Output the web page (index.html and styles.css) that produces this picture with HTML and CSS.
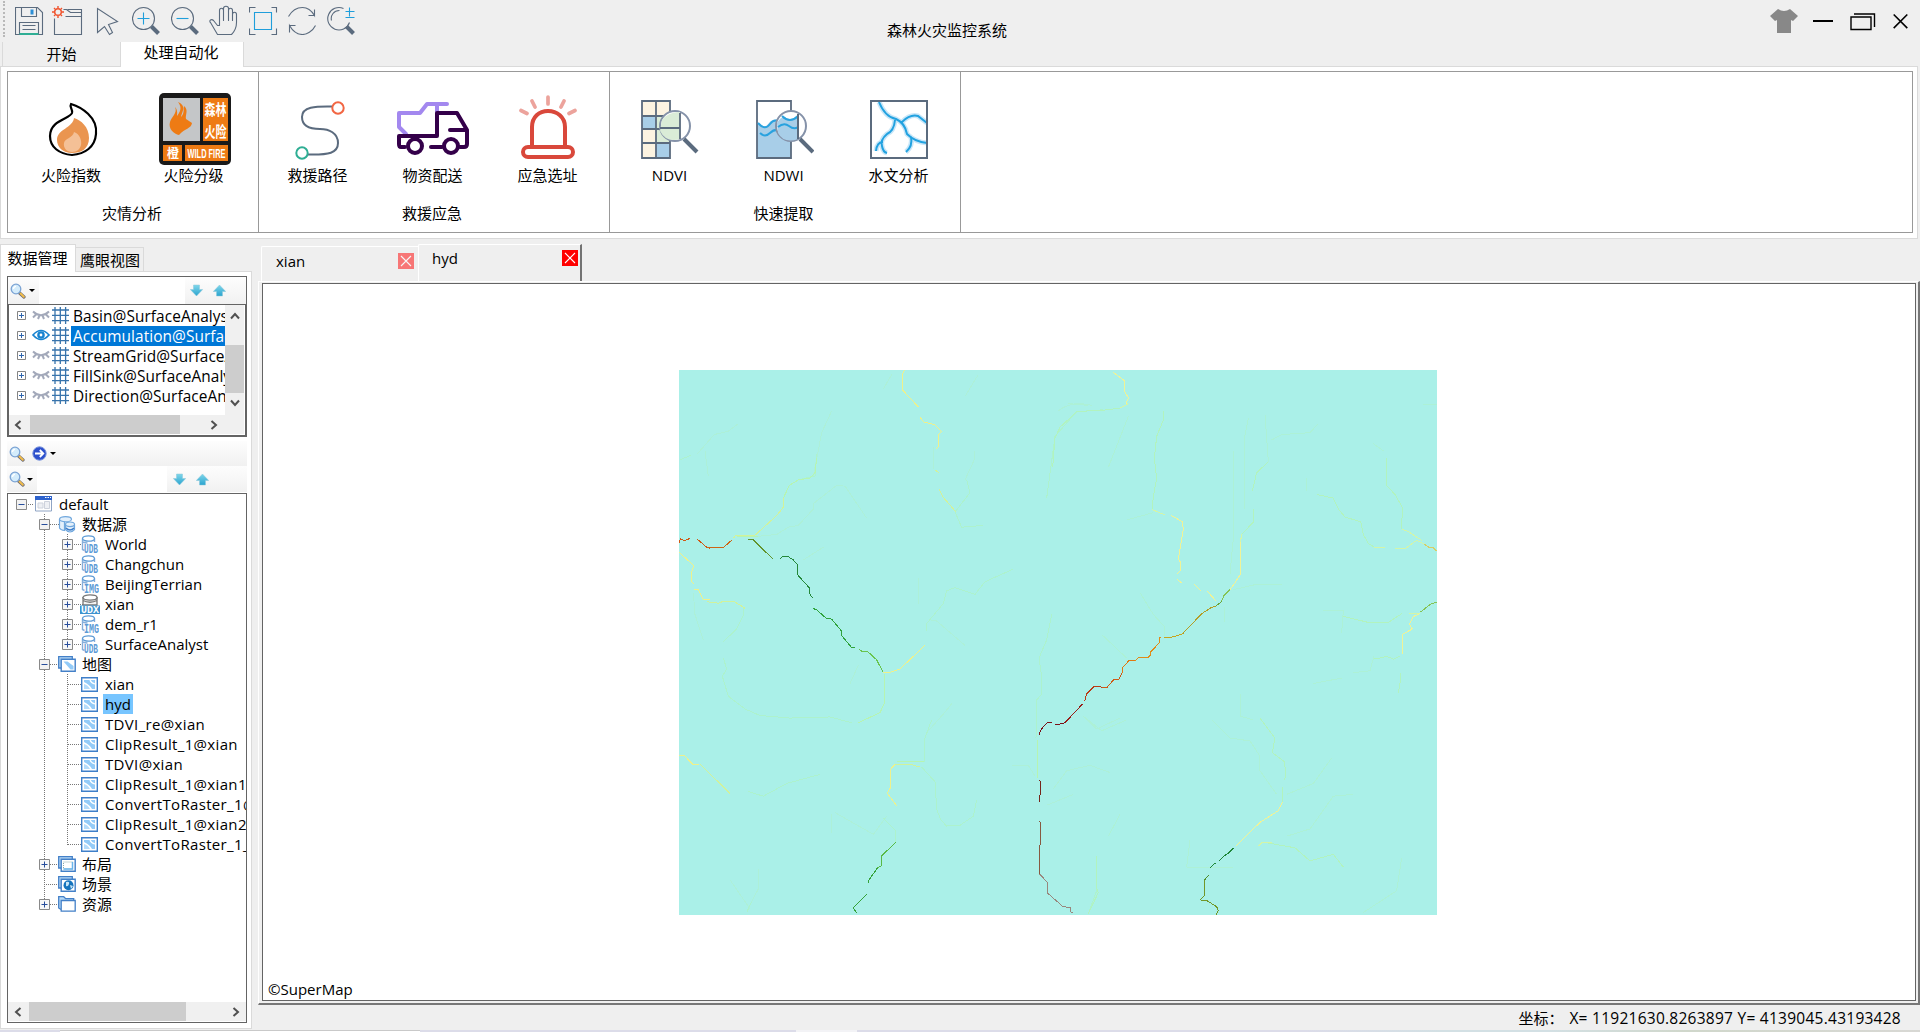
FILE: index.html
```html
<!DOCTYPE html>
<html lang="zh-CN">
<head>
<meta charset="utf-8">
<title>森林火灾监控系统</title>
<link rel="stylesheet" href="styles.css">
</head>
<body>
<svg class="defs" width="0" height="0">
  <defs>
    <linearGradient id="arrowFill" x1="0" y1="0" x2="0" y2="1"><stop offset="0" stop-color="#7fd6ea"/><stop offset="1" stop-color="#2ba4cf"/></linearGradient>
    <symbol id="search" viewBox="0 0 16 16"><path d="M9 9.500l5 4.500" stroke="#6a6a76" stroke-width="3.200" stroke-linecap="round"/><path d="M10.500 10.500l3.300 3.200" stroke="#f2bd4b" stroke-width="2" stroke-linecap="round"/><circle cx="6" cy="6" r="4.800" fill="#d4ecfb" stroke="#7ba3d4" stroke-width="1.300"/><path d="M3.500 6a2.500 2.500 0 0 1 2.500-2.600" stroke="#fff" stroke-width="1.400" fill="none"/></symbol>
    <symbol id="down" viewBox="0 0 13 13"><path d="M3.500 1h6v4.500h3.200l-6.200 6.500L.3 5.500h3.200z" fill="url(#arrowFill)" stroke="#8fc8da" stroke-width=".5"/></symbol>
    <symbol id="up" viewBox="0 0 13 13"><path d="M3.500 12h6V7.500h3.200L6.500 1 .3 7.500h3.200z" fill="url(#arrowFill)" stroke="#8fc8da" stroke-width=".5"/></symbol>
    <symbol id="go" viewBox="0 0 15 15"><circle cx="7.500" cy="7.500" r="6.700" fill="#2d50cc" stroke="#7b94dd"/><path d="M3 7.500h8M7.800 4l3.500 3.500L7.800 11" fill="none" stroke="#fff" stroke-width="1.800"/></symbol>
    <symbol id="closed-eye" viewBox="0 0 18 10"><path d="M1 1.500q8 7.500 16 0M4.500 4L1 7.500M7.500 5.500L6 9M10.500 5.500L12 9M13.500 4L17 7.500" fill="none" stroke="#a3a9ba" stroke-width="2"/></symbol>
    <symbol id="open-eye" viewBox="0 0 18 12"><path d="M1 6q8-9 16 0-8 9-16 0z" fill="#fff" stroke="#1683d0" stroke-width="1.700"/><circle cx="9" cy="6" r="3.800" fill="#1683d0"/><circle cx="9" cy="6" r="1.400" fill="#fff"/></symbol>
    <symbol id="raster" viewBox="0 0 17 17"><path d="M0 3h17M0 8.300h17M0 13.600h17M3 0v17M8.300 0v17M13.600 0v17" stroke="#3773ab" stroke-width="1.300"/></symbol>
    <symbol id="workspace" viewBox="0 0 18 16"><path d="M.5 1h16v14H.5z" fill="#fff" stroke="#8fa4c4"/><path d="M0 0h17v4H0z" fill="#2d62cc"/><path d="M10 1.500h6" stroke="#fff" stroke-dasharray="1.500 1"/><path d="M3 7h5v5H3zM9.500 5.500h5v7h-5z" fill="#eef0f4" stroke="#cdd2dc"/></symbol>
    <symbol id="sources" viewBox="0 0 18 17"><g fill="#e4f0fb" stroke="#70a7dd" stroke-width="1.200"><path d="M1.500 3v9q1 2 5 2.500V5"/><ellipse cx="7.500" cy="3.200" rx="6" ry="2.600"/><path d="M7.500 8.500v5q4.500 5 9 0v-5"/><ellipse cx="12" cy="8.300" rx="4.500" ry="2.300"/></g><path d="M8 12q4 4 8 0" fill="none" stroke="#3d7cc9" stroke-width="1.300"/></symbol>
    <symbol id="cylinder" viewBox="0 0 18 18"><path d="M1.500 3.500v11l2 1M13.500 3.500V7M1.500 7q3 1 5 1" fill="none" stroke="#86aedb" stroke-width="1.400"/><ellipse cx="7.500" cy="3.500" rx="6" ry="2.700" fill="#fff" stroke="#5f9cd6" stroke-width="1.300"/></symbol>
    <symbol id="mapicon" viewBox="0 0 17 15"><path d="M.7.700h15.600v13.600H.7z" fill="#fff" stroke="#3e7fc9" stroke-width="1.400"/><path d="M3 3h11v9h-3Q9 8 3 5z" fill="#93cbf8"/><path d="M3 7q4 1 6 5H3z" fill="#b5dcfb"/><path d="M9 3q1 3 5 4" stroke="#fff" stroke-width="1.200" fill="none"/></symbol>
    <symbol id="stack" viewBox="0 0 18 16"><path d="M3 12H.7V.7h13.600V3" fill="#b6d8f6" stroke="#4380c8" stroke-width="1.300"/><path d="M3.200 3.200h14v12h-14z" fill="#fff" stroke="#4380c8" stroke-width="1.400"/></symbol>
    <symbol id="plus" viewBox="0 0 11 11"><path d="M.5.5h10v10H.5z" fill="#f7f7f7" stroke="#898989"/><path d="M2.500 5.500h6M5.500 2.500v6" stroke="#274d9b"/></symbol>
    <symbol id="minus" viewBox="0 0 11 11"><path d="M.5.5h10v10H.5z" fill="#f2f2f2" stroke="#898989"/><path d="M2.500 5.500h6" stroke="#274d9b"/></symbol>
    <symbol id="plus-sm" viewBox="0 0 9 9"><path d="M.5.5h8v8H.5z" fill="#fff" stroke="#848484"/><path d="M2 4.500h5M4.500 2v5" stroke="#2f66ad"/></symbol>
    <symbol id="chev-l" viewBox="0 0 8 10"><path d="M6.500 1L2 5l4.500 4" fill="none" stroke="#505050" stroke-width="2"/></symbol>
    <symbol id="chev-r" viewBox="0 0 8 10"><path d="M1.500 1L6 5 1.500 9" fill="none" stroke="#505050" stroke-width="2"/></symbol>
    <symbol id="tabclose" viewBox="0 0 16 16"><path d="M0 0h16v16H0z" fill="#f00"/><path d="M3 3l10 10M13 3L3 13" stroke="#fff" stroke-width="1.100"/></symbol>
  </defs>
</svg>

<div class="window">
  <header class="titlebar">
    <div class="tools">
      <span class="grip"></span>
      <svg width="29" height="29" viewBox="-.5 -.5 29 29"><path d="M0 1h22l5 5v22H0zM6 1v9h15V1M4 28V16h19v12M7 19h13M7 23h13"/><path d="M15 3h3v5h-3z" fill="#2c8fd6" stroke="none"/><path d="M4 27.500h19" stroke="#2fae94" stroke-width="2"/></svg>
      <svg class="raised" width="31" height="31" viewBox="-.5 -.5 31 31"><path d="M2 13v16h27V4H15M11 4h3l4 3h11M13 11h16"/><circle cx="5.500" cy="6.500" r="3.300" stroke="#f0532d" stroke-width="1.500"/><path d="M5.500.500v2M5.500 10.500v2M-.500 6.500h2M9.500 6.500h2M1.500 2.500l1 1M8.500 9.500l1 1M9.500 2.500l-1 1M2.500 9.500l-1 1" stroke="#f0532d" stroke-width="1.400"/></svg>
      <svg class="cursor" width="23" height="29" viewBox="-.5 -.5 23 29"><path d="M1 1v24l7-6 5 8 3-2-4-8 9-3z"/></svg>
      <svg width="29" height="29" viewBox="-.5 -.5 29 29"><circle cx="11" cy="12" r="11"/><path d="M19 20l7 7" stroke-width="4"/><path d="M5 12h12M11 6v12" stroke="#1f9edb"/></svg>
      <svg width="29" height="29" viewBox="-.5 -.5 29 29"><circle cx="11" cy="12" r="11"/><path d="M19 20l7 7" stroke-width="4"/><path d="M5 12h12" stroke="#1f9edb"/></svg>
      <svg class="hand" width="29" height="30" viewBox="-.5 -.5 29 30"><path d="M8 29h14c4-4 5-8 5-12V9c0-3-4-3-4 0v6V5c0-3-4-3-4 0v10V3c0-3-5-3-5 0v12V5c0-3-4-3-4 0v15l-2 0-4-5c-2-2-5 0-3 2z" stroke-linejoin="round"/></svg>
      <svg width="29" height="29" viewBox="-.5 -.5 29 29"><path d="M0 6V1h6M22 1h5v5M27 22v6h-5M6 28H0v-6"/><path d="M5 6h17v17H5z" stroke="#1f9edb"/></svg>
      <svg width="29" height="29" viewBox="-.5 -.5 29 29"><path d="M0 10C4 3 10 1 14 1s9 3 12 8V3M26 9h-6M27 19C24 25 18 28 14 28S5 26 1 19v7M1 19h6"/></svg>
      <svg width="29" height="29" viewBox="-.5 -.5 29 29"><path d="M16 2A11.200 11.200 0 1 0 22 16M4 14A8 8 0 0 1 12 4"/><path d="M19 20l7 7" stroke-width="4"/><path d="M18 5h9M22 1v9M18 11h9" stroke="#1f9edb"/></svg>
    </div>
    <h1>森林火灾监控系统</h1>
    <div class="winbtns">
      <svg width="28" height="25" viewBox="0 0 28 25"><path d="M8 0q6 4 12 0l8 7-5 5-2-1v13H7V11l-2 1-5-5z" fill="#888"/></svg>
      <svg width="20" height="25" viewBox="0 0 20 25"><path d="M0 12h20" stroke="#000" stroke-width="2"/></svg>
      <svg width="26" height="25" viewBox="0 0 26 25" fill="none" stroke="#000" stroke-width="1.400"><path d="M1 8h20v12.500H1zM4 5h20.500v13"/></svg>
      <svg width="15" height="25" viewBox="0 0 15 25"><path d="M.7 5.500l13.600 13.600M14.300 5.500L.7 19.100" stroke="#000" stroke-width="1.600"/></svg>
    </div>
  </header>

  <nav class="ribbon-tabs"><span class="rtab">开始</span><span class="rtab active">处理自动化</span></nav>

  <section class="ribbon">
    <div class="groups">
      <div class="group g1">
        <div class="buttons">
          <div class="btn flame"><svg width="72" height="72" viewBox="0 0 72 72"><path d="M24 11c10 3 27 13 25 30-1 13-11 20-24 21-13-1-22-8-22-19 0-16 20-17 22-23 1-4-3-6-1-9z" fill="none" stroke="#000" stroke-width="2.200"/><path d="M27 25c7 2 15 9 15 20s-8 15-17 15-15-6-15-13c0-11 16-12 17-22z" fill="#ea9550"/><path d="M27 39c6 2 8 9 7 13s-4 7-9 7-9-4-8-9 9-5 10-11z" fill="#f4c096"/></svg><label>火险指数</label></div>
          <div class="btn badge"><svg width="72" height="72" viewBox="0 0 72 72"><rect width="72" height="72" rx="5" fill="#1a1a1a"/><path d="M4 5h37v43H4z" fill="#c4c6c8"/><path d="M44 5h25v43H44zM4 52h19v16H4zM26 52h43v16H26z" fill="#ee7b14"/><path d="M19 9c9 4 4 10 3 15 4-4 2-8 3-11 5 4 1 9 2 13l6 4c-1 6-7 5-13 12-5-1-11-6-9-13 1-5 8-9 5-15 3 3 2 7 2 9 5-6 4-10 1-14z" fill="#ee7b14"/><g class="badge-cjk"><text x="45.500" y="22" font-size="15" textLength="22" lengthAdjust="spacingAndGlyphs">森林</text><text x="45.500" y="44" font-size="15" textLength="22" lengthAdjust="spacingAndGlyphs">火险</text><text x="8" y="65" font-size="12">橙</text></g><text class="badge-latin" x="28.500" y="65" textLength="38" lengthAdjust="spacingAndGlyphs">WILD FIRE</text></svg><label>火险分级</label></div>
        </div>
        <div class="caption">灾情分析</div>
      </div>
      <div class="group g2">
        <div class="buttons">
          <div class="btn"><svg width="50" height="72" viewBox="0 0 50 72" fill="none"><path d="M38 13.500C20 13 7 14 7 24s9 12 18 12 18 4 18 14-9 12-30 11.500" stroke="#5b6b7e" stroke-width="2"/><circle cx="43" cy="15" r="5.700" fill="#fff" stroke="#f26643" stroke-width="2"/><circle cx="7" cy="60" r="5.700" fill="#fff" stroke="#2fae94" stroke-width="2"/></svg><label>救援路径</label></div>
          <div class="btn"><svg width="72" height="72" viewBox="0 0 72 72" fill="none" stroke-width="4" stroke-linejoin="round" stroke-linecap="round"><path d="M9 41l-7-7V20h21l7-9h20M40 11v8" stroke="#a388ef"/><path d="M8 54H4q-2 0-2-3v-8h38V20h20l10 17v14q0 3-3 3h-4M53 37h15M34 54h11" stroke="#34004a"/><circle cx="18" cy="53" r="7" stroke="#34004a"/><circle cx="54" cy="53" r="7" stroke="#34004a"/></svg><label>物资配送</label></div>
          <div class="btn"><svg width="58" height="72" viewBox="0 0 58 72" fill="none" stroke-linecap="round"><path d="M13 54V34c0-10 7-16 16-16s17 6 17 16v20" stroke="#d9483b" stroke-width="4"/><rect x="4" y="54" width="50" height="10" rx="5" stroke="#d9483b" stroke-width="4"/><path d="M29 4v7M13 8l3 6M45 8l-3 6M2 17.500l6 3M56 17.500l-6 3" stroke="#eca39c" stroke-width="3.700"/></svg><label>应急选址</label></div>
        </div>
        <div class="caption">救援应急</div>
      </div>
      <div class="group g3">
        <div class="buttons">
          <div class="btn"><svg width="58" height="72" viewBox="0 0 58 72"><path d="M1 8h28v57H1z" fill="#fcf3e1"/><path d="M1 23h14v13H1zM15 50h14v15H15z" fill="#a8cee8"/><path d="M15 23h14v27H15z" fill="#daecd7"/><path d="M1 8h28v57H1zM15 8v57M1 23h28M1 36h28M1 50h28" fill="none" stroke="#5b6b7e" stroke-width="1.800"/><circle cx="34" cy="33" r="15" fill="#fff" stroke="#8592a9" stroke-width="2"/><path d="M21 27q6-8 18-8v27q-14 4-20-8z" fill="#daecd7"/><path d="M19 35h20M39 20v26" stroke="#5b6b7e" stroke-width="1.800"/><path d="M43 46l13 13" stroke="#5b6b7e" stroke-width="4"/></svg><label>NDVI</label></div>
          <div class="btn"><svg width="58" height="72" viewBox="0 0 58 72"><path d="M1 30q7 7 12 0t16 0h6v35H1z" fill="#a8cee8"/><path d="M1 8h34v57H1z" fill="none" stroke="#5b6b7e" stroke-width="1.800"/><path d="M2 30q7 8 12 1t13 0M4 40q5 5 10 0t12-2" fill="none" stroke="#29a2df" stroke-width="2"/><circle cx="35" cy="33" r="15" fill="#fff" stroke="#8592a9" stroke-width="2"/><path d="M21 30q3-6 8-6 5 6 13 0v22q-14 5-20-6z" fill="#a8cee8"/><path d="M26 23q8 8 16 0M22 34q6-5 11-1 5 4 9 1" fill="none" stroke="#29a2df" stroke-width="2"/><path d="M42 21v25" stroke="#5b6b7e" stroke-width="2"/><path d="M44 46l13 13" stroke="#5b6b7e" stroke-width="4"/></svg><label>NDWI</label></div>
          <div class="btn water"><svg width="60" height="72" viewBox="0 0 60 72" fill="none"><g stroke="#c8e6f8" stroke-width="5"><path d="M10 9q6 15 17 17 9 4 11 15 8 8 20 9M33 29q8-8 16-6l9 7M26 27q-1 11-8 14-7 6-5 12 1 6 5 7M14 49q-6 0-7 9M42 44q2 9-5 15"/></g><g stroke="#22a2e0" stroke-width="2"><path d="M10 9q6 15 17 17 9 4 11 15 8 8 20 9M33 29q8-8 16-6l9 7M26 27q-1 11-8 14-7 6-5 12 1 6 5 7M14 49q-6 0-7 9M42 44q2 9-5 15"/></g><path d="M2 8h56v57H2z" stroke="#5b6b7e" stroke-width="2"/></svg><label>水文分析</label></div>
        </div>
        <div class="caption">快速提取</div>
      </div>
    </div>
  </section>

  <main class="workarea">
    <aside class="side">
      <div class="side-tabs"><span class="stab active">数据管理</span><span class="stab">鹰眼视图</span></div>
      <div class="side-body">
        <div class="layers">
          <div class="bar b1"><svg class="mag" width="16" height="16"><use href="#search"/></svg><i class="drop"></i><span class="field"></span><svg width="13" height="13"><use href="#down"/></svg><svg width="13" height="13"><use href="#up"/></svg></div>
          <div class="layer-view">
            <div class="layer-rows">
              <div class="layer"><svg class="ex" width="9" height="9"><use href="#plus-sm"/></svg><svg width="18" height="10"><use href="#closed-eye"/></svg><svg width="17" height="17"><use href="#raster"/></svg><span>Basin@SurfaceAnalyst</span></div>
              <div class="layer sel"><svg class="ex" width="9" height="9"><use href="#plus-sm"/></svg><svg width="18" height="12"><use href="#open-eye"/></svg><svg width="17" height="17"><use href="#raster"/></svg><span>Accumulation@SurfaceAnalyst</span></div>
              <div class="layer"><svg class="ex" width="9" height="9"><use href="#plus-sm"/></svg><svg width="18" height="10"><use href="#closed-eye"/></svg><svg width="17" height="17"><use href="#raster"/></svg><span>StreamGrid@SurfaceAnalyst</span></div>
              <div class="layer"><svg class="ex" width="9" height="9"><use href="#plus-sm"/></svg><svg width="18" height="10"><use href="#closed-eye"/></svg><svg width="17" height="17"><use href="#raster"/></svg><span>FillSink@SurfaceAnalyst</span></div>
              <div class="layer"><svg class="ex" width="9" height="9"><use href="#plus-sm"/></svg><svg width="18" height="10"><use href="#closed-eye"/></svg><svg width="17" height="17"><use href="#raster"/></svg><span>Direction@SurfaceAnalyst</span></div>
            </div>
            <div class="vscroll"><svg width="10" height="8" viewBox="0 0 10 8"><path d="M1 6.500L5 2l4 4.500" fill="none" stroke="#505050" stroke-width="2"/></svg><i></i><svg width="10" height="8" viewBox="0 0 10 8"><path d="M1 1.500L5 6l4-4.500" fill="none" stroke="#505050" stroke-width="2"/></svg></div>
            <div class="hscroll h1"><svg width="8" height="10"><use href="#chev-l"/></svg><i></i><svg width="8" height="10"><use href="#chev-r"/></svg></div>
          </div>
        </div>
        <div class="bar b2"><svg class="mag" width="16" height="16"><use href="#search"/></svg><svg width="15" height="15"><use href="#go"/></svg><i class="drop"></i></div>
        <div class="bar b3"><svg class="mag" width="16" height="16"><use href="#search"/></svg><i class="drop"></i><span class="field"></span><svg width="13" height="13"><use href="#down"/></svg><svg width="13" height="13"><use href="#up"/></svg></div>
        <div class="tree-box">
          <div class="tree">
            <div class="node l0"><svg class="ex" width="11" height="11"><use href="#minus"/></svg><svg class="ic" width="18" height="16"><use href="#workspace"/></svg><span>default</span></div>
            <div class="branch b-root">
              <div class="node l1"><svg class="ex" width="11" height="11"><use href="#minus"/></svg><svg class="ic" width="18" height="17"><use href="#sources"/></svg><span>数据源</span></div>
              <div class="branch b-sub">
                <div class="node l2"><svg class="ex" width="11" height="11"><use href="#plus"/></svg><svg class="ic" width="18" height="18"><use href="#cylinder"/><text class="tag" x="3" y="17.500" textLength="14" lengthAdjust="spacingAndGlyphs">UDB</text></svg><span>World</span></div>
                <div class="node l2"><svg class="ex" width="11" height="11"><use href="#plus"/></svg><svg class="ic" width="18" height="18"><use href="#cylinder"/><text class="tag" x="3" y="17.500" textLength="14" lengthAdjust="spacingAndGlyphs">UDB</text></svg><span>Changchun</span></div>
                <div class="node l2"><svg class="ex" width="11" height="11"><use href="#plus"/></svg><svg class="ic" width="18" height="18"><use href="#cylinder"/><text class="tag" x="3" y="17.500" textLength="15" lengthAdjust="spacingAndGlyphs">IMG</text></svg><span>BeijingTerrian</span></div>
                <div class="node l2"><svg class="ex" width="11" height="11"><use href="#plus"/></svg><svg class="ic udx" width="20" height="20" viewBox="0 0 20 20"><path d="M3 3v8h14V3M3 6.500q7 3.500 14 0" fill="#f3f3f3" stroke="#777" stroke-width="1.300"/><ellipse cx="10" cy="3.500" rx="7" ry="2.600" fill="#fff" stroke="#777" stroke-width="1.300"/><path d="M0 11.500h20V20H0z" fill="#3c92cf"/><text class="udx-tag" x="1" y="19" textLength="18" lengthAdjust="spacingAndGlyphs">UDX</text></svg><span>xian</span></div>
                <div class="node l2"><svg class="ex" width="11" height="11"><use href="#plus"/></svg><svg class="ic" width="18" height="18"><use href="#cylinder"/><text class="tag" x="3" y="17.500" textLength="15" lengthAdjust="spacingAndGlyphs">IMG</text></svg><span>dem_r1</span></div>
                <div class="node l2"><svg class="ex" width="11" height="11"><use href="#plus"/></svg><svg class="ic" width="18" height="18"><use href="#cylinder"/><text class="tag" x="3" y="17.500" textLength="14" lengthAdjust="spacingAndGlyphs">UDB</text></svg><span>SurfaceAnalyst</span></div>
              </div>
              <div class="node l1"><svg class="ex" width="11" height="11"><use href="#minus"/></svg><svg class="ic" width="18" height="16" viewBox="0 0 18 16"><use href="#stack" width="18" height="16"/><path d="M5.500 5.500h4l6 4.500v3.500h-3z" fill="#93cbf8"/></svg><span>地图</span></div>
              <div class="branch b-maps">
                <div class="node l2 leaf"><svg class="ic" width="17" height="15"><use href="#mapicon"/></svg><span>xian</span></div>
                <div class="node l2 leaf cur"><svg class="ic" width="17" height="15"><use href="#mapicon"/></svg><span>hyd</span></div>
                <div class="node l2 leaf wide"><svg class="ic" width="17" height="15"><use href="#mapicon"/></svg><span>TDVI_re@xian</span></div>
                <div class="node l2 leaf wide"><svg class="ic" width="17" height="15"><use href="#mapicon"/></svg><span>ClipResult_1@xian</span></div>
                <div class="node l2 leaf wide"><svg class="ic" width="17" height="15"><use href="#mapicon"/></svg><span>TDVI@xian</span></div>
                <div class="node l2 leaf wide"><svg class="ic" width="17" height="15"><use href="#mapicon"/></svg><span>ClipResult_1@xian1</span></div>
                <div class="node l2 leaf wide"><svg class="ic" width="17" height="15"><use href="#mapicon"/></svg><span>ConvertToRaster_1@xian</span></div>
                <div class="node l2 leaf wide"><svg class="ic" width="17" height="15"><use href="#mapicon"/></svg><span>ClipResult_1@xian2</span></div>
                <div class="node l2 leaf wide"><svg class="ic" width="17" height="15"><use href="#mapicon"/></svg><span>ConvertToRaster_1_1</span></div>
              </div>
              <div class="node l1"><svg class="ex" width="11" height="11"><use href="#plus"/></svg><svg class="ic" width="18" height="16" viewBox="0 0 18 16"><use href="#stack" width="18" height="16"/><path d="M5.500 6h9v7h-9z" fill="none" stroke="#8aa" stroke-dasharray="1 1"/><path d="M14.500 6v7h-9" fill="none" stroke="#69b5ec" stroke-width="1.500"/></svg><span>布局</span></div>
              <div class="node l1 leaf"><svg class="ic" width="18" height="16" viewBox="0 0 18 16"><use href="#stack" width="18" height="16"/><circle cx="10.500" cy="9.300" r="5" fill="#1674bd"/><path d="M8 6q4-1 3 2t-3 2zM12 9l3 1-2 3z" fill="#c5e5f7"/></svg><span>场景</span></div>
              <div class="node l1"><svg class="ex" width="11" height="11"><use href="#plus"/></svg><svg class="ic" width="18" height="16" viewBox="0 0 18 16"><path d="M3 13.500L.7 12V.7h5l2 2h8V5" fill="#b6d8f6" stroke="#4380c8" stroke-width="1.300"/><path d="M3.200 4.500h14v10.700h-14z" fill="#fff" stroke="#4380c8" stroke-width="1.300"/></svg><span>资源</span></div>
            </div>
          </div>
          <div class="hscroll h2"><svg width="8" height="10"><use href="#chev-l"/></svg><i></i><svg width="8" height="10"><use href="#chev-r"/></svg></div>
        </div>
      </div>
    </aside>

    <section class="docs">
      <div class="doc-tabs"><div class="dtab"><span>xian</span><svg class="dim" width="16" height="16"><use href="#tabclose"/></svg></div><div class="dtab active"><span>hyd</span><svg width="16" height="16"><use href="#tabclose"/></svg></div></div>
      <div class="page">
        <div class="canvas">
          <svg class="map" width="758" height="545" viewBox="0 0 758 545" shape-rendering="crispEdges">
            <rect width="758" height="545" fill="#aaf0e8"/>
            <g class="river" transform="translate(-9 -10) scale(.33333 .3635)">
              <g stroke="#adf0d8"><path d="M82 258L133 205 175 196 205 175M180 1430l60 80M245 1490l20-35V1400M105 250L115 320M430 320l25-120 30-60M495 1245l115 60 40-50M485 1250v50M775 1020q60-60 70-75M885 330l30-60V250M790 240v60M925 40l-40 60M1165 140q40-30 100-15"/><path d="M265 485L320 480 355 460 385 455 430 410V395L500 345 525 347 590 435M70 640L75 700 100 770M640 80L665 40M745 600V670M780 715L800 718 885 785M400 550l60-35M540 890l25-50M1240 980l40 35 70-30M1130 1225l80-30M1150 1180L1190 1130 1260 1115 1320 1135M1025 1115h50l20 30"/></g>
              <g stroke="#adf2cd"><path d="M30 275L62 262M384 330L420 322 435 320 440 260M160 775L200 740 222 700V680M160 820L170 850 157 870 175 925 225 960 270 978 360 985 480 982 545 998M235 1187L280 1200 350 1165 450 1140M765 1105V1040L785 990M755 1120L795 1160 800 1235 812 1265 830 1282 870 1280 910 1255 920 1210M640 1260L678 1295V1325M770 745V725L820 670 830 635 855 626 915 645 945 610 1030 575M855 418L900 365 890 330M855 418L875 460 940 455M1130 380L1155 210 1220 142 1300 137M1145 700L1130 770 1107 820 1115 870V920L1100 935 1098 1040M1280 1365V1460L1255 1523M230 1520l15-30"/></g>
              <g stroke="#b7f4b1"><path d="M265 485H200M440 270L435 310 420 325 385 330 358 345 340 380M643 865V945L630 970 565 998M680 1105H763M1103 1045V1150"/></g>
              <path stroke="#d2f29b" d="M340 380V405L320 428 255 482H198L190 490M110 665L145 669 160 664H192L225 683M90 1112L180 1192M675 1112H720L750 1120M797 303l9 7M808 356l10 20 40 42"/>
              <path stroke="#eff18b" d="M27 529L71 565 65 585V610L72 615M73 632H85L100 660H120M27 1088H43L68 1112H88M703 28L697 40V82L745 129M751 158L760 170 795 178 814 197 806 205V238L798 244M661 1127L675 1112M661 1127V1177L652 1192 681 1227M640 859H660L690 850 765 785"/>
              <path stroke="#cf5915" d="M27 502L31 492 42 497 60 491M82 493L110 515 120 518"/><path stroke="#cd6515" d="M110 516H160L186 495"/>
              <path stroke="#62932d" d="M235 493H248L308 547"/><path stroke="#24883a" d="M331 546L338 540H353L370 550 382 563V590L418 627V642L428 655"/><path stroke="#2fa33c" d="M430 684L440 687 468 710 485 713 514 745V757L545 791H555"/><path stroke="#69c44e" d="M568 797L575 801H592L620 825 638 857"/>
              <path stroke="#59b946" d="M677 1327L634 1365V1391L622 1398"/><path stroke="#36a23a" d="M622 1398L597 1430V1440M590 1470L550 1506 559 1521"/>
              <path stroke="#76261b" d="M1109 1154L1111 1160V1193L1109 1199V1215"/><path stroke="#875941" d="M1109 1269L1111 1272V1332L1109 1337V1414"/><path stroke="#98877d" d="M1109 1414L1132 1437V1466L1178 1503 1201 1507V1517L1210 1522"/>
            </g>
            <g class="river" transform="translate(341 -10) scale(.33333 .3635)">
              <g stroke="#adf1d6"><path d="M325 155L265 295M145 120L205 125M640 250V490L630 590M685 160L674 210V410M735 150L745 280M755 220L785 205 870 200 895 175M1060 230L1090 250M860 325V360M245 755L320 820M360 640L400 700 435 735V760M640 632L710 617H785M615 680V720M1000 860L1050 855 1062 815M880 890l85-15M662 920V980L700 990M575 990L630 1040 690 1048 720 1090V1130L770 1195M300 1250L265 1310M800 1310L870 1290 940 1200 1000 1195M500 1395H640M510 1320L500 1395M1145 1370L1130 1460 1030 1520M190 980L245 1020 320 990M800 1195l80-30 55-70M1210 122h40M320 440L400 420M910 690h60l-5 60"/></g>
              <g stroke="#b2f3be"><path d="M98 295L105 215 120 185 170 142 265 137 300 132M430 140V165L410 210 403 270 410 325 400 375 397 410M745 280L710 310 697 360M701 410V445L665 480M1100 270V345L1125 370 1147 405 1145 465M890 370L940 380 955 410 975 432 1022 445 1030 480 1045 505 1065 516M970 705L1045 722 1105 722 1145 698M1062 820H1080L1100 815 1120 823 1140 815M1142 860V880L1135 915M720 985L765 1040 757 1080 793 1105 798 1140 793 1155M787 1175V1220M229 1365V1450L235 1465 205 1523M740 1328L825 1342 870 1378 940 1360 970 1395"/></g>
              <path stroke="#d4f5a8" d="M300 132L325 120M397 412L435 426M666 478L661 500M1126 518H1157L1190 496 1212 506M1062 516H1095M1145 465L1165 472 1205 496M1168 697H1200M715 1337L725 1328 755 1327"/>
              <path stroke="#f0f396" d="M280 34L313 57V85L325 104 318 120M453 427L487 445 490 465 480 520 475 548 481 555V580L472 588M472 604L485 613M523 617L543 635M562 636L588 663M661 500V590L640 620M645 613L630 632M1200 697L1180 706 1168 727 1177 740 1147 755V810M787 1217L775 1240 720 1272 648 1337"/><path stroke="#d8ce65" d="M1212 506L1230 517H1240L1251 526"/>
              <path stroke="#85c354" d="M630 632L612 648 605 663M1201 694L1220 680 1235 670 1251 667"/><path stroke="#6aa43a" d="M605 663L598 670 587 677"/>
              <path stroke="#b39d25" d="M587 677L572 682 545 698 488 753"/><path stroke="#c7a41c" d="M488 753L470 759 450 763H432"/><path stroke="#e18b17" d="M423 763L418 765V778L392 803V812L384 818H357L344 828"/><path stroke="#e07811" d="M344 828H326L307 847V860"/><path stroke="#cf5915" d="M307 860L297 878H283L264 897V901H245"/><path stroke="#ba3b15" d="M245 901L242 898H222L199 920 194 938"/><path stroke="#971d18" d="M188 946L150 983 134 998"/><path stroke="#791118" d="M134 998L116 1002H105M96 997H83L69 1009 58 1027V1032"/>
              <path stroke="#1f8739" d="M643 1341L622 1359 611 1365 598 1378M587 1383L571 1396"/><path stroke="#528f2b" d="M566 1417L554 1430"/><path stroke="#729629" d="M554 1430V1473L541 1484 545 1487H560L590 1504 595 1515 589 1526"/>
            </g>
          </svg>
          <div class="credit">©SuperMap</div>
        </div>
      </div>
      <div class="status"><span>坐标：</span><span class="coords">X= 11921630.8263897 Y= 4139045.43193428</span></div>
    </section>
  </main>
  <footer class="strip"><i class="s1"></i><i class="s2"></i><i class="s3"></i><i class="s4"></i><i class="s5"></i></footer>
</div>
</body>
</html>
```

FILE: styles.css
```css
* { box-sizing: border-box; }
html, body { margin: 0; width: 1920px; height: 1032px; overflow: hidden; }
body { background: #efefef; color: #000; font: 15px/20px "Open Sans", "Noto Sans CJK SC", sans-serif; }
svg { display: block; flex: none; }
.defs { position: absolute; }
.window { height: 1032px; display: flex; flex-direction: column; }

/* title bar */
.titlebar { height: 42px; flex: none; display: grid; grid-template-columns: 887px 1fr auto; }
.tools { display: flex; align-items: flex-start; padding: 6px 0 0 3px; gap: 10px; }
.tools svg { fill: none; stroke: #5b6b7e; stroke-width: 1.1; }
.grip { width: 4px; height: 36px; margin: -5px -2px 0 0; border-left: 2px dotted #b9b9b9; }
.tools .raised { margin: -1px -1px 0 -2px; }
.tools .cursor { margin: 1px 3px 0 4px; }
.tools .hand { margin: -1px 1px 0 -1px; }
h1 { font: inherit; margin: 20px 0 0; }
.winbtns { display: flex; padding: 9px 12px 0 0; gap: 17px; }
.winbtns svg:first-child { margin-right: -2px; }

/* ribbon */
.ribbon-tabs { height: 24px; flex: none; display: flex; padding-left: 2px; }
.rtab { width: 118px; text-align: center; border-left: 1px solid #dadada; line-height: 24px; }
.rtab.active { width: 124px; height: 25px; position: relative; z-index: 1; background: #fff; border-right: 1px solid #dadada; line-height: 20px; padding-right: 2px; }
.ribbon { height: 173px; width: 1918px; flex: none; border: 1px solid #dadada; background: #fff; padding: 4px 4px 5px 6px; }
.groups { height: 162px; border: 1px solid #999; display: flex; }
.group { border-right: 1px solid #999; padding-top: 21px; }
.g1 { width: 251px; }
.g2, .g3 { width: 351px; }
.buttons { display: flex; }
.btn { display: flex; flex-direction: column; align-items: center; }
.btn label { line-height: 20px; height: 40px; }
.g1 .btn { width: 122px; }
.flame { margin-left: 2px; }
.flame svg { margin-left: 24px; }
.badge svg { margin-left: 3px; }
.badge label { margin-left: 1px; }
.badge-cjk { fill: #fff; font-family: "Noto Sans CJK SC", sans-serif; font-weight: 700; }
.badge-latin { fill: #fff; font: 700 13px "Liberation Sans", sans-serif; }
.g2 .buttons, .g3 .buttons { padding-left: 1px; }
.g2 .btn, .g3 .btn { width: 115px; }
.g2 .btn:first-child svg { margin-left: 5px; }
.g3 .btn svg { margin-left: 2px; }
.g3 .btn:first-child label { margin-left: 2px; }
.g3 .water svg { margin-left: 0; }
.caption { text-align: center; line-height: 20px; margin-top: -2px; }
.g1 .caption { padding-right: 2px; }
.g2 .caption { padding-right: 4px; }
.g3 .caption { padding-right: 3px; }

/* work area */
.workarea { height: 791px; flex: none; display: grid; grid-template-columns: 258px 1fr; }
.side { width: 252px; padding-top: 5px; }
.side-tabs { display: flex; align-items: flex-end; height: 27px; }
.stab { width: 68px; height: 24px; border: 1px solid #dadada; border-left: 0; border-bottom: 0; text-align: center; line-height: 24px; padding-left: 1px; }
.stab.active { width: 76px; height: 28px; border-left: 1px solid #dadada; background: #fff; position: relative; z-index: 1; margin-bottom: -1px; line-height: 26px; padding: 0 1px 0 0; }
.side-body { height: 758px; border: 1px solid #dadada; background: #fff; padding: 4px 4px 5px 6px; }
.bar { display: flex; align-items: center; background: linear-gradient(#fdfdfd, #f1f1f1); }
.drop { width: 0; height: 0; border: 3px solid transparent; border-top-color: #000; border-bottom: 0; }
.field { background: #fff; align-self: stretch; }
.mag { margin-left: 2px; }
.mag + .drop { margin-left: 3px; }
.layers { height: 161px; border: 1px solid #646464; display: flex; flex-direction: column; }
.b1 { height: 27px; flex: none; }
.b1 .field { width: 146px; margin: 0 5px 0 4px; }
.b1 svg + svg, .b3 svg + svg { margin-left: 10px; }
.layer-view { flex: 1; border: 1px solid #646464; display: grid; grid-template: 110px 19px / 216px 19px; }
.layer-rows { background: #fff; overflow: hidden; padding-top: 1px; }
.layer { height: 20px; display: flex; align-items: center; padding-left: 8px; white-space: nowrap; font-size: 15.4px; letter-spacing: .08px; }
.layer > svg:nth-child(2) { margin-left: 6px; }
.layer > svg:nth-child(3) { margin-left: 2px; }
.layer > svg { margin-bottom: 2px; }
.layer > span { margin-left: 2px; padding: 1px 0 0 2px; height: 20px; line-height: 20px; flex: 1 0 auto; }
.layer.sel > span { background: #0078d7; color: #fff; }
.vscroll { background: #f0f0f0; display: flex; flex-direction: column; align-items: center; padding-top: 7px; }
.vscroll i { width: 19px; height: 48px; background: #cdcdcd; margin: 25px 0 6px; }
.hscroll { height: 19px; background: #f0f0f0; display: flex; align-items: center; }
.hscroll i { height: 19px; background: #cdcdcd; }
.h1 { grid-column: 1 / 3; padding-left: 5px; }
.h1 i { width: 150px; margin: 0 30px 0 8px; }
.b2 { height: 25px; margin-top: 4px; }
.b2 svg + svg { margin: 0 3px 0 7px; }
.b3 { height: 26px; }
.b3 .mag + .drop { margin-left: 2px; }
.b3 .field { width: 130px; margin: 0 6px 0 4px; }
.tree-box { height: 530px; margin-top: 1px; border: 1px solid #646464; background: #fff; display: flex; flex-direction: column; }
.tree { flex: 1; overflow: hidden; }
.h2 { flex: none; padding-left: 6px; margin-bottom: 1px; }
.h2 i { width: 157px; margin: 0 46px 0 7px; }
.node { display: flex; align-items: center; height: 20px; white-space: nowrap; }
.node span { padding: 0 2px; height: 20px; line-height: 20px; }
.wide span { letter-spacing: .34px; }
.l0 { padding-left: 8px; }
.l1 { padding-left: 31px; }
.l2 { padding-left: 54px; }
.node .ic { margin: 0 4px 0 8px; }
.node .udx { margin: 0 3px 0 7px; }
.node.leaf .ic { margin: 0 4px 0 19px; }
.l2.leaf .ic { margin-right: 5px; }
/* dotted connector lines */
.node { background: repeating-linear-gradient(90deg, #777 0 1px, transparent 1px 2px) no-repeat; background-size: 16px 1px; }
.l0 { background-position: 10px 10px; }
.l1 { background-position: 36px 10px; }
.l2 { background-position: 60px 10px; }
.branch { background: repeating-linear-gradient(#777 0 1px, transparent 1px 2px) no-repeat; }
.b-root { background-position: 36px 0; background-size: 1px 390px; }
.b-sub { background-position: 59px 0; background-size: 1px 110px; }
.b-maps { background-position: 59px 0; background-size: 1px 171px; }
.cur span { background: #77c5ff; }
.tag { font: 700 12px "Liberation Mono", monospace; fill: #5c9ad6; }
.udx-tag { font: 700 10px "Liberation Mono", monospace; fill: #fff; }

/* documents */
.docs { display: flex; flex-direction: column; }
.doc-tabs { display: flex; height: 42px; padding: 5px 0 0 3px; align-items: flex-end; }
.dtab { width: 157px; height: 35px; border: solid #fff; border-width: 1px 0 0 1px; border-top-left-radius: 2px; display: flex; justify-content: space-between; padding: 4px 4px 0 14px; }
.dtab.active { width: 164px; height: 37px; border-right: 2px solid #737373; padding: 3px 2px 0 13px; }
.dtab svg { margin-top: 2px; }
.dim { opacity: .5; }
.page { height: 724px; border: solid; border-width: 1px 2px 2px 1px; border-color: #fff #777 #777 #fff; padding: 1px 2px 2px 3px; }
.canvas { height: 718px; border: 1px solid #646464; background: #fff; display: flex; flex-direction: column; }
.map { margin: 86px 0 0 416px; }
.river { fill: none; stroke-width: 1px; }
.river path { vector-effect: non-scaling-stroke; }
.credit { margin: 64px 0 0 5px; }
.status { display: flex; justify-content: flex-end; padding: 3px 19px 0 0; gap: 6px; }
.coords { font-size: 15.5px; letter-spacing: .26px; }

/* edge of the desktop below the window */
.strip { flex: none; height: 2px; display: flex; }
.s1 { width: 60px; background: #dcdce9; }
.s2 { width: 360px; background: #fff; border-top: 1px solid #c9c9c9; }
.s3 { width: 376px; background: #dcdce9; }
.s4 { width: 61px; background: #f3f3f6; }
.s5 { flex: 1; background: linear-gradient(90deg, #dcdce9 0 42%, #d3e0e4 55% 65%, #d0d7cb 78%, #d8d8d4); }
```
